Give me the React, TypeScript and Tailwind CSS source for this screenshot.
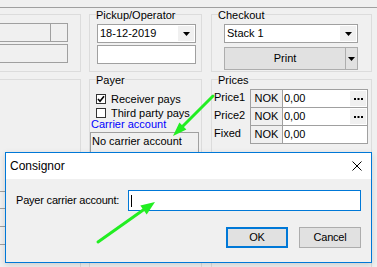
import React from "react";

function Group({ label, className, children }: { label?: string; className?: string; children?: React.ReactNode }) {
  return (
    <div className={`border border-[#dcdcdc] ${className ?? ""}`}>
      {label && (
        <div className="-mt-[6px] ml-[6px] h-[13px] w-fit bg-[#f0f0f0] leading-[13px]">{label}</div>
      )}
      {children}
    </div>
  );
}

function Tri() {
  return (
    <svg width="7" height="4" viewBox="0 0 7 4">
      <polygon points="0,0 7,0 3.5,4" fill="#000" />
    </svg>
  );
}

function Combo({ value, width }: { value: string; width: string }) {
  return (
    <div className={`flex h-[19px] ${width} border border-[#a0a0a0] bg-white`}>
      <div className="flex-1 pl-[2px] leading-[17px]">{value}</div>
      <div className="my-px mr-px flex w-[16px] items-center justify-center bg-[#f0f0f0]">
        <Tri />
      </div>
    </div>
  );
}

function Dots() {
  return (
    <div className="my-px mr-px flex w-[16px] items-center justify-center bg-[#f0f0f0]">
      <svg width="9" height="2" viewBox="0 0 9 2">
        <rect x="0" y="0" width="2" height="2" fill="#000" />
        <rect x="3.5" y="0" width="2" height="2" fill="#000" />
        <rect x="7" y="0" width="2" height="2" fill="#000" />
      </svg>
    </div>
  );
}

function PriceRow({ label, dots, last }: { label: string; dots?: boolean; last?: boolean }) {
  return (
    <div className="flex">
      <div className="h-[18px] w-[38px] pl-[2px] leading-[16px]">{label}</div>
      <div
        className={`flex w-[118px] border-x border-t border-[#a0a0a0] ${last ? "h-[19px] border-b" : "h-[18px]"}`}
      >
        <div className="w-[32px] border-r border-[#a0a0a0] bg-[#f0f0f0] text-center leading-[17px]">NOK</div>
        <div className="flex flex-1 bg-white">
          <div className="flex-1 pl-px leading-[17px]">0,00</div>
          {dots && <Dots />}
        </div>
      </div>
    </div>
  );
}

function Check({ checked, label }: { checked?: boolean; label: string }) {
  return (
    <div className="flex h-[14px] items-center">
      <div className="ml-[6px] flex h-[10px] w-[10px] items-center justify-center border border-[#333333] bg-white">
        {checked && (
          <svg width="8" height="8" viewBox="0 0 8 8">
            <path d="M1 4 L3 6.2 L7 1.2" fill="none" stroke="#000" strokeWidth="1.6" />
          </svg>
        )}
      </div>
      <div className="ml-[5px] leading-[14px]">{label}</div>
    </div>
  );
}

export default function App() {
  return (
    <div className="relative h-[267px] w-[377px] overflow-hidden bg-[#f0f0f0] font-['Liberation_Sans',sans-serif] text-[11px] text-black">
      <div className="h-[7px]" />
      <div className="h-px bg-[#a0a0a0]" />
      <div className="flex">
        {/* Column A */}
        <div className="-ml-[10px] flex w-[91px] flex-col">
          <Group className="mt-[6px] h-[58px]">
            <div className="mt-[8px] flex flex-col items-end pr-[12px]">
              <div className="flex h-[19px] w-[78px] border border-[#a0a0a0] bg-[#f0f0f0]">
                <div className="flex-1 border-r border-[#a0a0a0]" />
                <div className="w-[16px]" />
              </div>
              <div className="mt-[2px] h-[19px] w-[78px] border border-[#a0a0a0] bg-[#f0f0f0]" />
            </div>
          </Group>
          <Group className="mt-[7px] h-[200px]">
            <div className="h-[111px]" />
            <div className="h-[18px] border-y border-[#a0a0a0]" />
            <div className="h-[18px] border-b border-[#a0a0a0]" />
            <div className="h-[18px] border-b border-[#a0a0a0]" />
          </Group>
        </div>

        {/* Column B */}
        <div className="ml-[8px] flex w-[113px] flex-col">
          <Group label="Pickup/Operator" className="mt-[6px] h-[58px]">
            <div className="ml-[7px] mt-[2px]">
              <Combo value="18-12-2019" width="w-[99px]" />
              <div className="mt-[2px] h-[19px] w-[99px] border border-[#a0a0a0] bg-white" />
            </div>
          </Group>
          <Group label="Payer" className="mt-[7px] h-[200px]">
            <div className="mt-[5px]">
              <Check checked label="Receiver pays" />
              <Check label="Third party pays" />
            </div>
            <div className="-mt-[2px] ml-px h-[13px] leading-[13px] text-[#0000ff]">Carrier account</div>
            <div className="mt-px h-[30px] w-[109px] border border-[#a0a0a0] pl-px leading-[16px]">
              No carrier account
            </div>
          </Group>
        </div>

        {/* Column C */}
        <div className="ml-[9px] flex w-[161px] flex-col">
          <Group label="Checkout" className="mt-[6px] h-[58px]">
            <div className="ml-[12px] mt-[2px]">
              <Combo value="Stack 1" width="w-[134px]" />
              <div className="mt-[4px] flex h-[23px] w-[134px] border border-[#adadad] bg-[#e1e1e1]">
                <div className="flex-1 border-r border-[#adadad] text-center leading-[21px]">Print</div>
                <div className="flex w-[11px] items-center justify-center">
                  <Tri />
                </div>
              </div>
            </div>
          </Group>
          <Group label="Prices" className="mt-[7px] h-[200px]">
            <div className="mt-[2px]">
              <PriceRow label="Price1" dots />
              <PriceRow label="Price2" dots />
              <PriceRow label="Fixed" last />
            </div>
          </Group>
        </div>
      </div>

      {/* Dialog */}
      <div className="absolute left-[5px] top-[152px] flex h-[111px] w-[367px] flex-col border border-[#0078d7] bg-[#f0f0f0] shadow-[0_2px_6px_rgba(0,0,0,0.15)]">
        <div className="flex h-[26px] items-center justify-between bg-white pl-[4px] pr-[9px]">
          <div className="text-[12px] leading-[26px]">Consignor</div>
          <svg width="10" height="10" viewBox="0 0 10 10">
            <path d="M0.5 0.5 L9.5 9.5 M9.5 0.5 L0.5 9.5" stroke="#000" strokeWidth="1" />
          </svg>
        </div>
        <div className="mt-[11px] flex items-center justify-between px-[10px] tracking-[-0.2px]">
          <div className="leading-[13px]">Payer carrier account:</div>
          <div className="flex h-[21px] w-[233px] items-center border border-[#0078d7] bg-white pl-[2px]">
            <div className="h-[12px] w-px bg-black" />
          </div>
        </div>
        <div className="mt-[16px] flex justify-end gap-[11px] px-[10px] tracking-[-0.2px]">
          <div className="h-[21px] w-[62px] border-2 border-[#0078d7] bg-[#e1e1e1] text-center leading-[17px]">OK</div>
          <div className="h-[21px] w-[62px] border border-[#adadad] bg-[#e1e1e1] text-center leading-[19px]">Cancel</div>
        </div>
      </div>

      {/* Green annotation arrows */}
      <svg className="pointer-events-none absolute inset-0" width="377" height="267" viewBox="0 0 377 267">
        <line x1="213" y1="96" x2="181" y2="128" stroke="#22ee22" strokeWidth="3" strokeLinecap="round" />
        <polygon points="173,136 186.4,129.6 179.4,122.6" fill="#22ee22" />
        <line x1="98" y1="242" x2="146" y2="208" stroke="#22ee22" strokeWidth="3" strokeLinecap="round" />
        <polygon points="155,202 146.7,214.6 140.3,205.5" fill="#22ee22" />
      </svg>
    </div>
  );
}
